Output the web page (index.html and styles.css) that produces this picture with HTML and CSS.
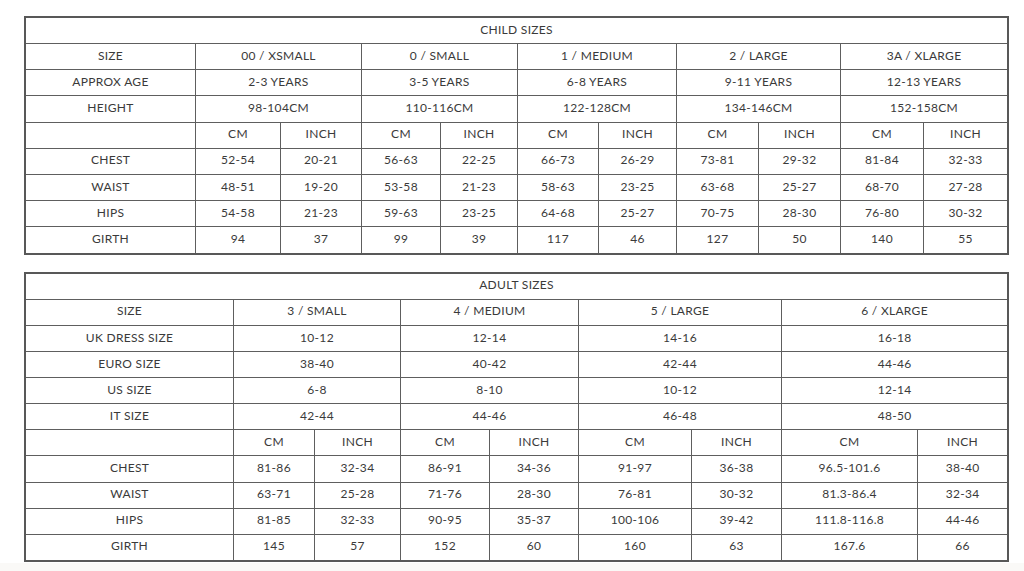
FILE: index.html
```html
<!DOCTYPE html>
<html>
<head>
<meta charset="utf-8">
<link rel="stylesheet" href="styles.css">
</head>
<body>
<div class="page">
<table class="sizes child">
<colgroup>
<col style="width:169px"><col style="width:85px"><col style="width:81px"><col style="width:79px"><col style="width:77px"><col style="width:81px"><col style="width:78px"><col style="width:82px"><col style="width:82px"><col style="width:83px"><col style="width:84px">
</colgroup>
<tr><td colspan="11">CHILD SIZES</td></tr>
<tr><td>SIZE</td><td colspan="2">00 / XSMALL</td><td colspan="2">0 / SMALL</td><td colspan="2">1 / MEDIUM</td><td colspan="2">2 / LARGE</td><td colspan="2">3A / XLARGE</td></tr>
<tr><td>APPROX AGE</td><td colspan="2">2-3 YEARS</td><td colspan="2">3-5 YEARS</td><td colspan="2">6-8 YEARS</td><td colspan="2">9-11 YEARS</td><td colspan="2">12-13 YEARS</td></tr>
<tr><td>HEIGHT</td><td colspan="2">98-104CM</td><td colspan="2">110-116CM</td><td colspan="2">122-128CM</td><td colspan="2">134-146CM</td><td colspan="2">152-158CM</td></tr>
<tr><td></td><td>CM</td><td>INCH</td><td>CM</td><td>INCH</td><td>CM</td><td>INCH</td><td>CM</td><td>INCH</td><td>CM</td><td>INCH</td></tr>
<tr><td>CHEST</td><td>52-54</td><td>20-21</td><td>56-63</td><td>22-25</td><td>66-73</td><td>26-29</td><td>73-81</td><td>29-32</td><td>81-84</td><td>32-33</td></tr>
<tr><td>WAIST</td><td>48-51</td><td>19-20</td><td>53-58</td><td>21-23</td><td>58-63</td><td>23-25</td><td>63-68</td><td>25-27</td><td>68-70</td><td>27-28</td></tr>
<tr><td>HIPS</td><td>54-58</td><td>21-23</td><td>59-63</td><td>23-25</td><td>64-68</td><td>25-27</td><td>70-75</td><td>28-30</td><td>76-80</td><td>30-32</td></tr>
<tr><td>GIRTH</td><td>94</td><td>37</td><td>99</td><td>39</td><td>117</td><td>46</td><td>127</td><td>50</td><td>140</td><td>55</td></tr>
</table>

<table class="sizes adult">
<colgroup>
<col style="width:207px"><col style="width:81px"><col style="width:86px"><col style="width:89px"><col style="width:89px"><col style="width:113px"><col style="width:90px"><col style="width:136px"><col style="width:90px">
</colgroup>
<tr><td colspan="9">ADULT SIZES</td></tr>
<tr><td>SIZE</td><td colspan="2">3 / SMALL</td><td colspan="2">4 / MEDIUM</td><td colspan="2">5 / LARGE</td><td colspan="2">6 / XLARGE</td></tr>
<tr><td>UK DRESS SIZE</td><td colspan="2">10-12</td><td colspan="2">12-14</td><td colspan="2">14-16</td><td colspan="2">16-18</td></tr>
<tr><td>EURO SIZE</td><td colspan="2">38-40</td><td colspan="2">40-42</td><td colspan="2">42-44</td><td colspan="2">44-46</td></tr>
<tr><td>US SIZE</td><td colspan="2">6-8</td><td colspan="2">8-10</td><td colspan="2">10-12</td><td colspan="2">12-14</td></tr>
<tr><td>IT SIZE</td><td colspan="2">42-44</td><td colspan="2">44-46</td><td colspan="2">46-48</td><td colspan="2">48-50</td></tr>
<tr><td></td><td>CM</td><td>INCH</td><td>CM</td><td>INCH</td><td>CM</td><td>INCH</td><td>CM</td><td>INCH</td></tr>
<tr><td>CHEST</td><td>81-86</td><td>32-34</td><td>86-91</td><td>34-36</td><td>91-97</td><td>36-38</td><td>96.5-101.6</td><td>38-40</td></tr>
<tr><td>WAIST</td><td>63-71</td><td>25-28</td><td>71-76</td><td>28-30</td><td>76-81</td><td>30-32</td><td>81.3-86.4</td><td>32-34</td></tr>
<tr><td>HIPS</td><td>81-85</td><td>32-33</td><td>90-95</td><td>35-37</td><td>100-106</td><td>39-42</td><td>111.8-116.8</td><td>44-46</td></tr>
<tr><td>GIRTH</td><td>145</td><td>57</td><td>152</td><td>60</td><td>160</td><td>63</td><td>167.6</td><td>66</td></tr>
</table>
</div>
</body>
</html>
```

FILE: styles.css
```css
html, body {
  margin: 0;
  padding: 0;
  background: #ffffff;
}
.page {
  width: 1024px;
  height: 571px;
  padding: 16px 0 0 24px;
  box-sizing: border-box;
  background: linear-gradient(#ffffff 563px, #faf9f7 563px);
}
.sizes {
  border-collapse: separate;
  border-spacing: 0;
  table-layout: fixed;
  width: 985px;
  border: 2px solid #585858;
  font-family: Lato, "Liberation Sans", sans-serif;
  font-size: 12px;
  color: #3a3a3a;
}
.sizes td {
  box-sizing: border-box;
  border-top: 1px solid #5e5e5e;
  border-left: 1px solid #5e5e5e;
  height: 26.2px;
  padding: 0 0 3px 0;
  text-align: center;
  vertical-align: middle;
  white-space: nowrap;
  letter-spacing: 0.3px;
}
.adult td {
  height: 26.1px;
}
.sizes tr:first-child td {
  border-top: 0;
  height: 25px;
}
.sizes td:first-child {
  border-left: 0;
}
.adult {
  margin-top: 17.4px;
}
```
